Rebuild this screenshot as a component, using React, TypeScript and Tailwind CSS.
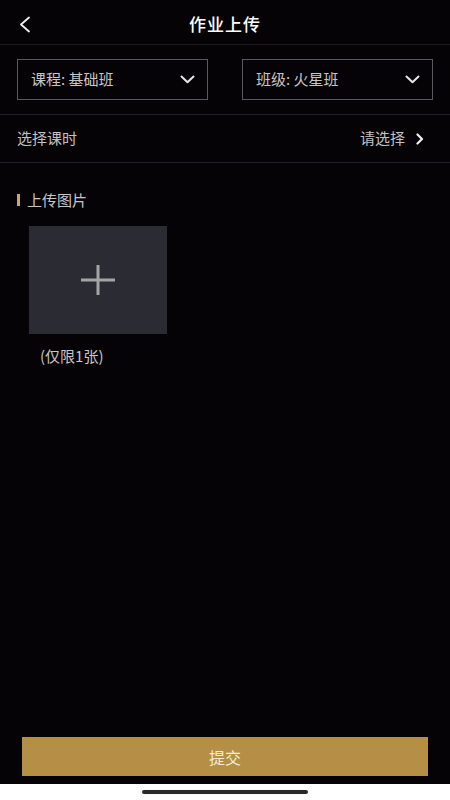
import React from "react";

const font = { fontFamily: '"Noto Sans CJK SC", "Noto Sans", sans-serif' };

function Chevron() {
  return (
    <svg width="15" height="9" viewBox="0 0 15 9">
      <path d="M1.5 1.5 L7.5 7.3 L13.5 1.5" fill="none" stroke="#e6e6e6" strokeWidth="2" strokeLinecap="round" strokeLinejoin="round" />
    </svg>
  );
}

export default function App() {
  return (
    <div className="w-[450px] h-[800px] bg-[#060307] flex flex-col text-[#d8d8d8]" style={font}>
      {/* header */}
      <div className="h-[45px] flex items-center relative border-b border-[#1c1a1d] shrink-0">
        <div className="absolute left-[18px] top-[16px]">
          <svg width="14" height="17" viewBox="0 0 14 17">
            <path d="M11 1.5 L3 8.5 L11 15.5" fill="none" stroke="#f0f0f0" strokeWidth="1.8" strokeLinecap="round" strokeLinejoin="round" />
          </svg>
        </div>
        <div className="flex-1 text-center text-[17px] text-white font-medium tracking-[1px] pt-[3px]">作业上传</div>
      </div>

      {/* dropdowns */}
      <div className="flex justify-between px-[17px] pt-[14px] pb-[14px] border-b border-[#221f24]">
        <div className="w-[191px] h-[41px] border border-[#5a585c] flex items-center justify-between pl-[13px] pr-[12px]">
          <span className="text-[15px] text-[#c6c6c6]">课程: 基础班</span>
          <Chevron />
        </div>
        <div className="w-[191px] h-[41px] border border-[#5a585c] flex items-center justify-between pl-[13px] pr-[12px]">
          <span className="text-[15px] text-[#c6c6c6]">班级: 火星班</span>
          <Chevron />
        </div>
      </div>

      {/* lesson row */}
      <div className="h-[48px] flex items-center justify-between pl-[17px] pr-[26px] border-b border-[#221f24]">
        <span className="text-[15px] text-[#c2c2c2]">选择课时</span>
        <div className="flex items-center gap-[11px]">
          <span className="text-[15px] text-[#c2c2c2]">请选择</span>
          <svg width="8" height="12" viewBox="0 0 8 12">
            <path d="M1.5 1.5 L6 6 L1.5 10.5" fill="none" stroke="#f0f0f0" strokeWidth="2.2" strokeLinecap="round" strokeLinejoin="round" />
          </svg>
        </div>
      </div>

      {/* upload section */}
      <div className="pt-[26px] pl-[17px]">
        <div className="flex items-center gap-[7px]">
          <div className="w-[3px] h-[12px] bg-[#c9a86a]" />
          <span className="text-[15px] text-[#c6c6c6]">上传图片</span>
        </div>
        <div className="ml-[12px] mt-[14px] w-[138px] h-[108px] bg-[#2a2b33] flex items-center justify-center">
          <svg width="34" height="30" viewBox="0 0 34 30">
            <rect x="0" y="13.5" width="34" height="3" fill="#a3a3a8" />
            <rect x="15.5" y="0" width="3" height="30" fill="#a3a3a8" />
          </svg>
        </div>
        <div className="ml-[23px] mt-[11px] text-[15px] text-[#c6c6c6]">(仅限1张)</div>
      </div>

      <div className="flex-1" />

      {/* submit */}
      <div className="px-[22px] pb-[8px]">
        <div className="h-[39px] bg-[#b48f45] flex items-center justify-center text-[16px] text-[#f4ecd9]">提交</div>
      </div>
      <div className="h-[16px] bg-white flex items-center justify-center shrink-0">
        <div className="w-[166px] h-[4px] rounded-full bg-[#2a2a2a]" />
      </div>
    </div>
  );
}
